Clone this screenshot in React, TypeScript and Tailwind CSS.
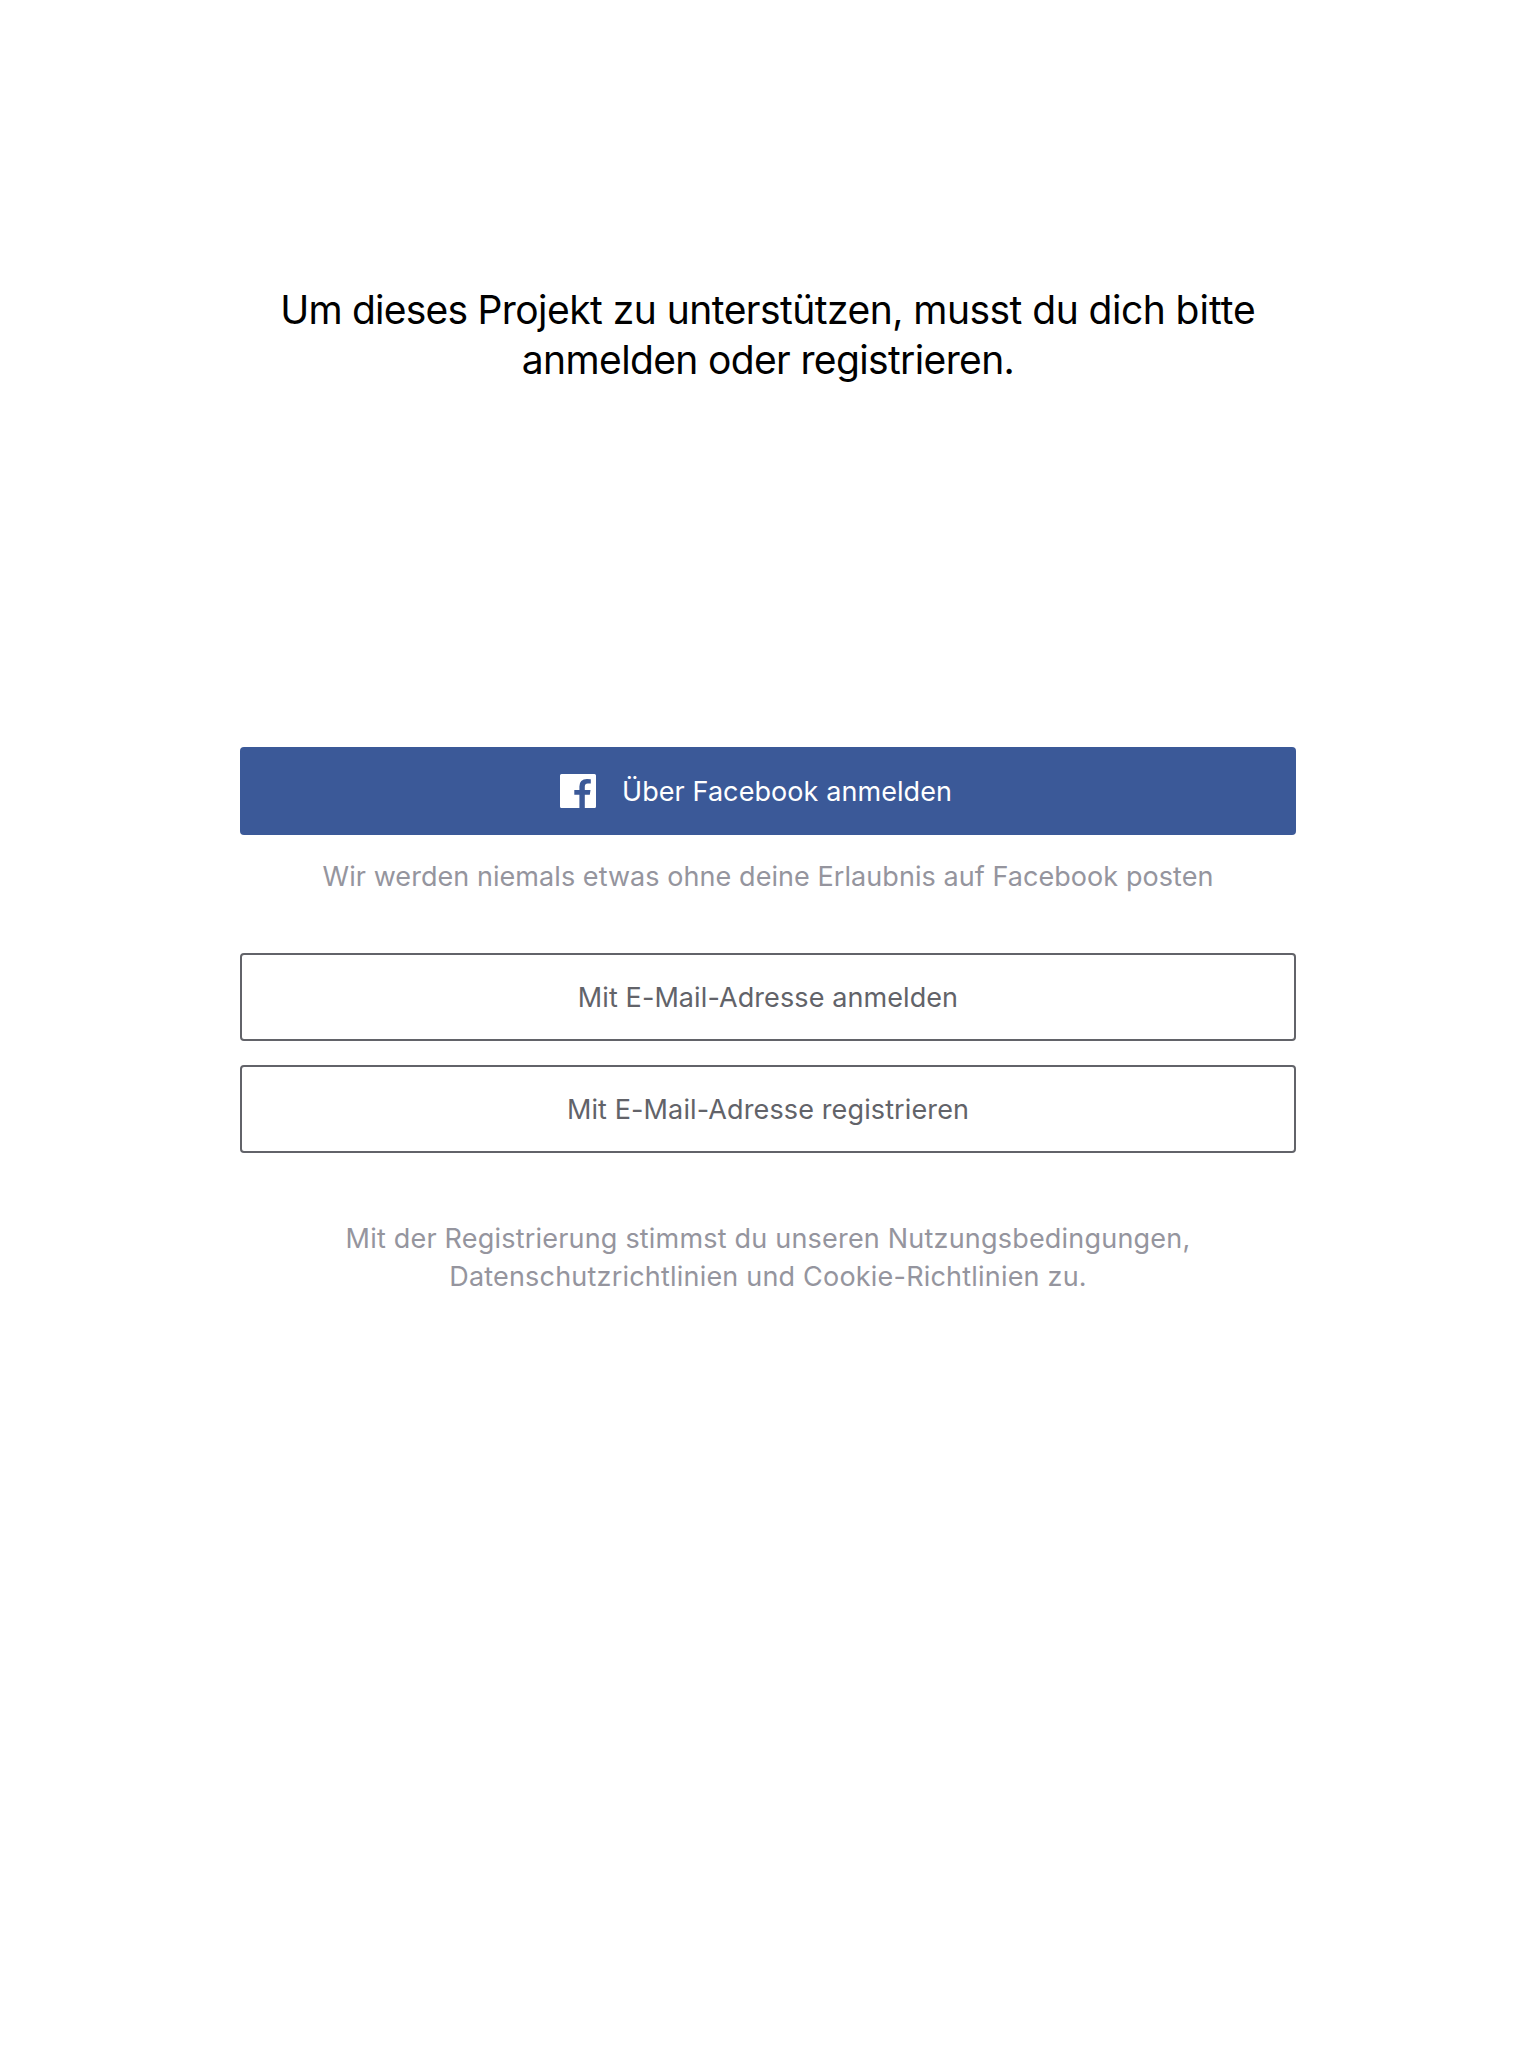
export default function App() {
  return (
    <main className="flex h-[2048px] w-[1536px] flex-col items-center bg-white font-['Inter',sans-serif]">
      <h1 className="mt-[285px] h-[100px] whitespace-nowrap text-center text-[39px] font-normal leading-[50px] text-black">
        <span className="block tracking-[-0.53px] [font-variant-ligatures:none]">
          <span className="tracking-[-0.79px]">Um dieses </span>Projekt zu unterstützen, musst du dich <span className="tracking-[-0.01px]">bitte</span>
        </span>
        <span className="block tracking-[-0.64px]">anmelden oder registrieren.</span>
      </h1>
      <button className="mt-[362px] flex h-[88px] w-[1056px] items-center rounded-[4px] bg-[#3b5998] pl-[320px] text-[27px] text-white">
        <svg className="h-[34px] w-9" viewBox="0 0 36 34" fill="currentColor">
          <path d="M1.5 0H34.5Q36 0 36 1.5V32.5Q36 34 34.5 34H24.8V20.8H29.8L30.5 16H24.8V12.6Q24.8 9.6 27.8 9.6H30.8V5.2Q29.2 4.9 27 4.9Q19.4 4.9 19.4 12.4V16H14.3V20.8H19.4V34H1.5Q0 34 0 32.5V1.5Q0 0 1.5 0Z" />
        </svg>
        <span className="ml-[26px] whitespace-nowrap pt-[3px] tracking-[0.08px]">Über Facebook anmelden</span>
      </button>
      <p className="mt-[22px] h-[38px] whitespace-nowrap text-[27px] leading-[39px] tracking-[0.06px] text-[#95959e]">Wir werden niemals etwas ohne deine Erlaubnis auf Facebook posten</p>
      <button className="mt-[58px] h-[88px] w-[1056px] rounded-[4px] border-2 border-[#626369] pt-[3px] text-[27px] tracking-[0.09px] text-[#626369]">Mit E-Mail-Adresse anmelden</button>
      <button className="mt-6 h-[88px] w-[1056px] rounded-[4px] border-2 border-[#626369] pt-[3px] text-[27px] tracking-[0.12px] text-[#626369]">Mit E-Mail-Adresse registrieren</button>
      <p className="mt-[67px] whitespace-nowrap text-center text-[27px] leading-[38px] tracking-[0.2px] text-[#95959e]">
        <span className="block">Mit der Registrierung stimmst du unseren Nutzungsbedingungen,</span>
        <span className="block">Datenschutzrichtlinien und Cookie-Richtlinien zu.</span>
      </p>
    </main>
  );
}
